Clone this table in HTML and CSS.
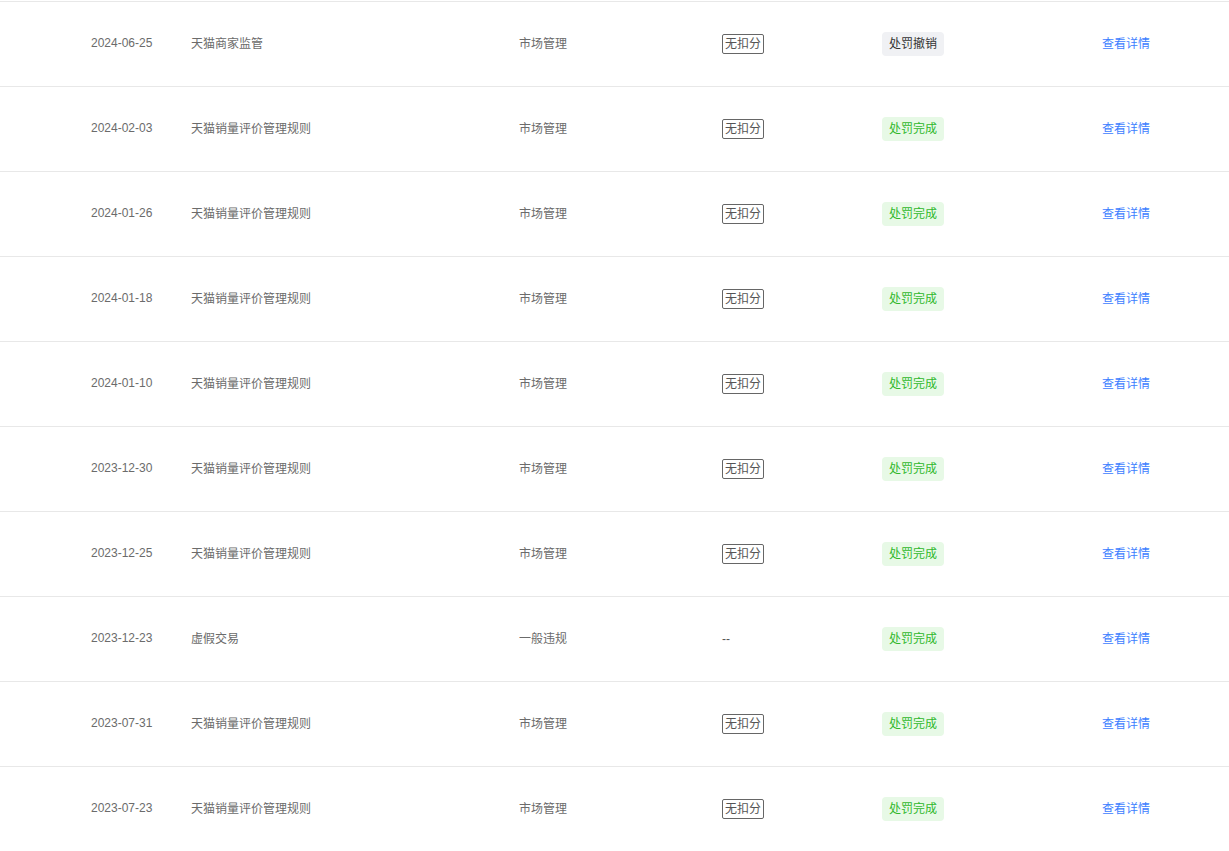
FILE: index.html
```html
<!DOCTYPE html>
<html lang="zh-CN">

<head>
    <meta charset="UTF-8">
    <meta name="viewport" content="width=device-width, initial-scale=1.0">
    <title>违规记录</title>
    <link rel="stylesheet" href="styles.css">
</head>

<body>
    <div class="record-list">

        <div class="record-row">
            <span class="col-date">2024-06-25</span>
            <span class="col-rule">天猫商家监管</span>
            <span class="col-type">市场管理</span>
            <span class="col-point"><em class="point-tag">无扣分</em></span>
            <span class="col-status"><em class="status status-cancel">处罚撤销</em></span>
            <span class="col-op"><a href="#">查看详情</a></span>
        </div>

        <div class="record-row">
            <span class="col-date">2024-02-03</span>
            <span class="col-rule">天猫销量评价管理规则</span>
            <span class="col-type">市场管理</span>
            <span class="col-point"><em class="point-tag">无扣分</em></span>
            <span class="col-status"><em class="status status-done">处罚完成</em></span>
            <span class="col-op"><a href="#">查看详情</a></span>
        </div>

        <div class="record-row">
            <span class="col-date">2024-01-26</span>
            <span class="col-rule">天猫销量评价管理规则</span>
            <span class="col-type">市场管理</span>
            <span class="col-point"><em class="point-tag">无扣分</em></span>
            <span class="col-status"><em class="status status-done">处罚完成</em></span>
            <span class="col-op"><a href="#">查看详情</a></span>
        </div>

        <div class="record-row">
            <span class="col-date">2024-01-18</span>
            <span class="col-rule">天猫销量评价管理规则</span>
            <span class="col-type">市场管理</span>
            <span class="col-point"><em class="point-tag">无扣分</em></span>
            <span class="col-status"><em class="status status-done">处罚完成</em></span>
            <span class="col-op"><a href="#">查看详情</a></span>
        </div>

        <div class="record-row">
            <span class="col-date">2024-01-10</span>
            <span class="col-rule">天猫销量评价管理规则</span>
            <span class="col-type">市场管理</span>
            <span class="col-point"><em class="point-tag">无扣分</em></span>
            <span class="col-status"><em class="status status-done">处罚完成</em></span>
            <span class="col-op"><a href="#">查看详情</a></span>
        </div>

        <div class="record-row">
            <span class="col-date">2023-12-30</span>
            <span class="col-rule">天猫销量评价管理规则</span>
            <span class="col-type">市场管理</span>
            <span class="col-point"><em class="point-tag">无扣分</em></span>
            <span class="col-status"><em class="status status-done">处罚完成</em></span>
            <span class="col-op"><a href="#">查看详情</a></span>
        </div>

        <div class="record-row">
            <span class="col-date">2023-12-25</span>
            <span class="col-rule">天猫销量评价管理规则</span>
            <span class="col-type">市场管理</span>
            <span class="col-point"><em class="point-tag">无扣分</em></span>
            <span class="col-status"><em class="status status-done">处罚完成</em></span>
            <span class="col-op"><a href="#">查看详情</a></span>
        </div>

        <div class="record-row">
            <span class="col-date">2023-12-23</span>
            <span class="col-rule">虚假交易</span>
            <span class="col-type">一般违规</span>
            <span class="col-point">--</span>
            <span class="col-status"><em class="status status-done">处罚完成</em></span>
            <span class="col-op"><a href="#">查看详情</a></span>
        </div>

        <div class="record-row">
            <span class="col-date">2023-07-31</span>
            <span class="col-rule">天猫销量评价管理规则</span>
            <span class="col-type">市场管理</span>
            <span class="col-point"><em class="point-tag">无扣分</em></span>
            <span class="col-status"><em class="status status-done">处罚完成</em></span>
            <span class="col-op"><a href="#">查看详情</a></span>
        </div>

        <div class="record-row">
            <span class="col-date">2023-07-23</span>
            <span class="col-rule">天猫销量评价管理规则</span>
            <span class="col-type">市场管理</span>
            <span class="col-point"><em class="point-tag">无扣分</em></span>
            <span class="col-status"><em class="status status-done">处罚完成</em></span>
            <span class="col-op"><a href="#">查看详情</a></span>
        </div>

    </div>
</body>

</html>
```

FILE: styles.css
```css
body {
    font-family: 'Liberation Sans', 'Noto Sans CJK SC', sans-serif;
    margin: 0;
    padding: 0;
    background-color: #fff;
    color: #6b6b6b;
    font-size: 12px;
}

.record-list {
    padding-top: 1px;
}

/* one row of the record table */
.record-row {
    display: grid;
    grid-template-columns: 100px 328px 203px 160px 220px 1fr;
    align-items: center;
    height: 84px;
    padding-left: 91px;
    border-top: 1px solid #e8e8e8;
    line-height: 16px;
}

.record-row em {
    font-style: normal;
}

.col-date {
    margin-top: -2px;
}

.col-point {
    color: #555;
}

.point-tag {
    display: inline-block;
    padding: 0 2px;
    line-height: 18px;
    border: 1px solid #666;
    border-radius: 2px;
    color: #555;
}

.status {
    display: inline-block;
    padding: 0 7px;
    line-height: 24px;
    border-radius: 4px;
}

.status-cancel {
    background-color: #f0f1f4;
    color: #333;
}

.status-done {
    background-color: #e7f9e6;
    color: #2fb82c;
}

.col-op a {
    color: #3d80ff;
    text-decoration: none;
}
```
